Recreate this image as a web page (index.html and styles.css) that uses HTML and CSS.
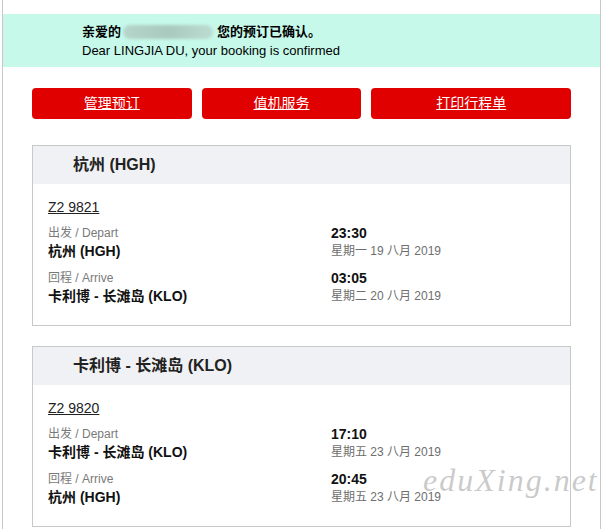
FILE: index.html
```html
<!DOCTYPE html>
<html lang="zh-CN">
<head>
    <meta charset="UTF-8">
    <title>预订确认</title>
    <link rel="stylesheet" href="styles.css">
</head>
<body>
    <div class="page">
        <div class="banner">
            <p class="greet">亲爱的<span class="name-blur"></span>您的预订已确认。</p>
            <p class="greet-en">Dear LINGJIA DU, your booking is confirmed</p>
        </div>

        <div class="actions">
            <a class="btn btn-manage" href="#">管理预订</a>
            <a class="btn btn-checkin" href="#">值机服务</a>
            <a class="btn btn-print" href="#">打印行程单</a>
        </div>

        <!-- 去程 -->
        <div class="flight">
            <div class="flight-head">杭州 (HGH)</div>
            <div class="flight-body">
                <a class="flight-no" href="#">Z2 9821</a>
                <div class="leg">
                    <div>
                        <p class="label">出发 / Depart</p>
                        <p class="place">杭州 (HGH)</p>
                    </div>
                    <div>
                        <p class="time">23:30</p>
                        <p class="date">星期一 19 八月 2019</p>
                    </div>
                </div>
                <div class="leg">
                    <div>
                        <p class="label">回程 / Arrive</p>
                        <p class="place">卡利博 - 长滩岛 (KLO)</p>
                    </div>
                    <div>
                        <p class="time">03:05</p>
                        <p class="date">星期二 20 八月 2019</p>
                    </div>
                </div>
            </div>
        </div>

        <!-- 回程 -->
        <div class="flight">
            <div class="flight-head">卡利博 - 长滩岛 (KLO)</div>
            <div class="flight-body">
                <a class="flight-no" href="#">Z2 9820</a>
                <div class="leg">
                    <div>
                        <p class="label">出发 / Depart</p>
                        <p class="place">卡利博 - 长滩岛 (KLO)</p>
                    </div>
                    <div>
                        <p class="time">17:10</p>
                        <p class="date">星期五 23 八月 2019</p>
                    </div>
                </div>
                <div class="leg">
                    <div>
                        <p class="label">回程 / Arrive</p>
                        <p class="place">杭州 (HGH)</p>
                    </div>
                    <div>
                        <p class="time">20:45</p>
                        <p class="date">星期五 23 八月 2019</p>
                    </div>
                </div>
            </div>
        </div>

        <span class="watermark">eduXing.net</span>
    </div>
</body>
</html>
```

FILE: styles.css
```css
* {
    margin: 0;
    padding: 0;
    box-sizing: border-box;
}

body {
    font-family: "Liberation Sans", Arial, "Noto Sans CJK SC", sans-serif;
    color: #111;
    background-color: #fff;
    overflow: hidden;
}

.page {
    position: relative;
    width: 599px;
    min-height: 529px;
    margin-left: 2px;
    padding: 14px 0 0;
    border-left: 1px solid #c9c9c9;
    border-right: 1px solid #c9c9c9;
}

.banner {
    height: 53px;
    padding: 8px 0 7px 79px;
    background-color: #c6f9ea;
    font-size: 13px;
    line-height: 19px;
    color: #000;
}

.greet {
    font-weight: bold;
    display: flex;
    align-items: center;
}

.name-blur {
    display: inline-block;
    width: 90px;
    height: 14px;
    margin: 0 4px 0 2px;
    border-radius: 7px;
    background: linear-gradient(90deg, #b6d6cb, #a9c9be 50%, #bcdcd1);
    filter: blur(1.5px);
}

.actions {
    display: grid;
    grid-template-columns: 4fr 4fr 5fr;
    gap: 10px;
    margin: 21px 29px 0;
}

.btn {
    display: block;
    height: 31px;
    line-height: 31px;
    text-align: center;
    font-size: 14px;
    color: #fff;
    background-color: #e00000;
    border-radius: 4px;
}

.flight {
    margin: 26px 29px 0;
    border: 1px solid #c8c8c8;
}

.flight + .flight {
    margin-top: 20px;
}

.flight-head {
    height: 38px;
    line-height: 38px;
    padding-left: 40px;
    background-color: #f0f1f4;
    font-size: 16px;
    font-weight: bold;
    color: #222;
}

.flight-body {
    padding: 14px 15px 20px;
    line-height: 18px;
}

.flight-no {
    display: inline-block;
    margin-bottom: 8px;
    font-size: 14px;
    color: #222;
}

.leg {
    display: grid;
    grid-template-columns: 283px 1fr;
}

.leg + .leg {
    margin-top: 9px;
}

.label {
    font-size: 12px;
    color: #7a7a7a;
}

.place {
    font-size: 14px;
    font-weight: bold;
    color: #111;
}

.time {
    font-size: 14px;
    font-weight: bold;
    color: #111;
}

.date {
    font-size: 12px;
    color: #6e6e6e;
}

.watermark {
    position: absolute;
    left: 420px;
    top: 462px;
    font-family: "Liberation Serif", serif;
    font-style: italic;
    font-size: 32px;
    letter-spacing: 2px;
    color: rgba(150, 150, 150, 0.5);
    pointer-events: none;
}
```
